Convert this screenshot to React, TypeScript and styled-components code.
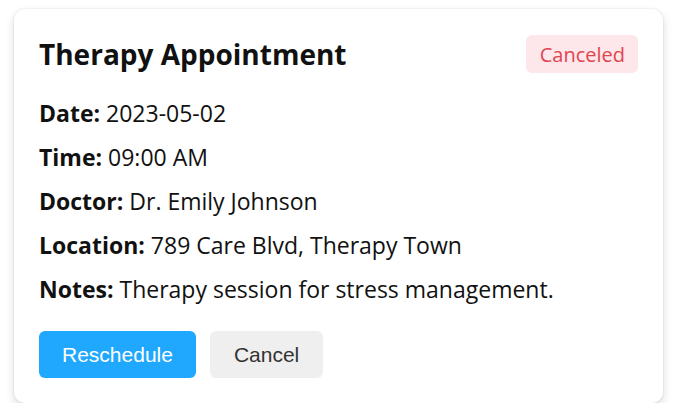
import React from "react";
import styled, { createGlobalStyle } from "styled-components";

const Global = createGlobalStyle`
  html, body { margin: 0; padding: 0; background: #ffffff; }
  body { font-family: "Open Sans", "Noto Sans", sans-serif; }
`;

const Page = styled.div`
  padding: 9px 0 0 14px;
`;

const Card = styled.div`
  box-sizing: border-box;
  width: 649px;
  height: 394px;
  background: #fff;
  border-radius: 11px;
  box-shadow: 0 4px 10px rgba(0, 0, 0, 0.14), 0 0 2px rgba(0, 0, 0, 0.12);
  padding: 26px 25px 25px 25px;
  display: flex;
  flex-direction: column;
`;

const Header = styled.div`
  display: flex;
  align-items: center;
  justify-content: space-between;
  height: 38px;
  margin-bottom: 26px;
`;

const Title = styled.h2`
  margin: 0;
  font-size: 28px;
  font-weight: 700;
  color: #111;
  line-height: 38px;
`;

const Badge = styled.span`
  display: inline-flex;
  align-items: center;
  height: 38px;
  padding: 0 13px 0 14px;
  border-radius: 6px;
  background: #fde7ea;
  color: #e0454f;
  font-size: 20px;
`;

const Rows = styled.div`
  display: flex;
  flex-direction: column;
  gap: 16px;
`;

const Row = styled.div`
  font-size: 23px;
  line-height: 28px;
  color: #111;
  white-space: nowrap;
`;

const Label = styled.strong`
  font-weight: 700;
`;

const Actions = styled.div`
  display: flex;
  gap: 14px;
  margin-top: 28px;
`;

const Button = styled.button<{ $primary?: boolean }>`
  height: 47px;
  padding: 0 ${(p) => (p.$primary ? "23px" : "24px")};
  border: none;
  border-radius: 6px;
  font-family: "Liberation Sans", Arial, sans-serif;
  font-size: 21px;
  background: ${(p) => (p.$primary ? "#20a8fe" : "#efefef")};
  color: ${(p) => (p.$primary ? "#fff" : "#333")};
  cursor: pointer;
`;

const details: [string, string][] = [
  ["Date:", "2023-05-02"],
  ["Time:", "09:00 AM"],
  ["Doctor:", "Dr. Emily Johnson"],
  ["Location:", "789 Care Blvd, Therapy Town"],
  ["Notes:", "Therapy session for stress management."],
];

export default function App() {
  return (
    <>
      <Global />
      <Page>
        <Card>
          <Header>
            <Title>Therapy Appointment</Title>
            <Badge>Canceled</Badge>
          </Header>
          <Rows>
            {details.map(([l, v]) => (
              <Row key={l}>
                <Label>{l}</Label> {v}
              </Row>
            ))}
          </Rows>
          <Actions>
            <Button $primary>Reschedule</Button>
            <Button>Cancel</Button>
          </Actions>
        </Card>
      </Page>
    </>
  );
}
